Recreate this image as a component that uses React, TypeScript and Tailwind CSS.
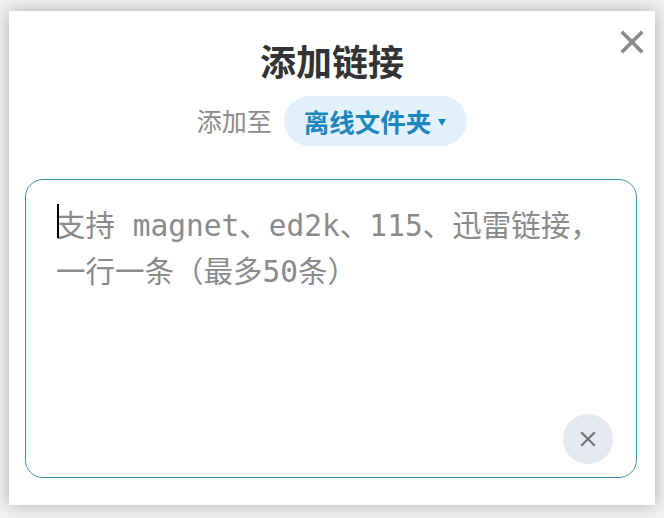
import React from "react";

const cjk = "font-['Noto_Sans_CJK_SC','Noto_Sans',sans-serif]";

function CloseIcon({ className }: { className?: string }) {
  return (
    <svg viewBox="0 0 24 24" className={className} fill="none" stroke="currentColor" strokeLinecap="square">
      <path d="M3 3 L21 21 M21 3 L3 21" />
    </svg>
  );
}

export default function App() {
  return (
    <div className="w-[664px] h-[518px] bg-[#f1f1f1] pt-[11px] pl-[9px] overflow-hidden">
      <div className="relative w-[646px] h-[494px] bg-white shadow-[0_0_14px_rgba(0,0,0,0.28)] flex flex-col items-center pt-[27px]">
        {/* 关闭 */}
        <button className="absolute top-[19px] right-[11px] w-[24px] h-[24px] text-[#8a8a8a]">
          <CloseIcon className="w-[24px] h-[24px] stroke-[3.6]" />
        </button>

        <h2 className={`${cjk} text-[36px] leading-[44px] font-bold text-[#333333]`}>添加链接</h2>

        <div className="mt-[14px] flex items-center gap-[12px]">
          <span className={`${cjk} text-[25px] text-[#8c8c8c]`}>添加至</span>
          <button className="h-[50px] pl-[20px] pr-[21px] rounded-full bg-[#e2f1fc] flex items-center gap-[7px]">
            <span className={`${cjk} text-[25.5px] font-bold text-[#1c86bd]`}>离线文件夹</span>
            <span className="w-0 h-0 border-l-[4px] border-r-[4px] border-t-[7px] border-l-transparent border-r-transparent border-t-[#1c86bd] mt-[2px]" />
          </button>
        </div>

        {/* 输入框 */}
        <div className="relative mt-[33px] self-start ml-[16px] w-[612px] h-[299px]">
          <textarea
            className="w-full h-full resize-none rounded-[18px] border-[1.5px] border-[#3896a8] pl-[30px] pr-[24px] pt-[23px] font-['DejaVu_Sans_Mono','Noto_Sans_CJK_SC',monospace] text-[29.5px] leading-[46px] text-[#333] placeholder:text-[#8a8a8a] outline-none"
            placeholder={"支持 magnet、ed2k、115、迅雷链接，\n一行一条（最多50条）"}
          />
          <span className="pointer-events-none absolute left-[32px] top-[25px] w-[2px] h-[34px] bg-black" />
          <button className="absolute right-[24px] bottom-[14px] w-[50px] h-[50px] rounded-full bg-[#e6e9f0] flex items-center justify-center text-[#72767b]">
            <CloseIcon className="w-[16px] h-[16px] stroke-[3.2]" />
          </button>
        </div>
      </div>
    </div>
  );
}
